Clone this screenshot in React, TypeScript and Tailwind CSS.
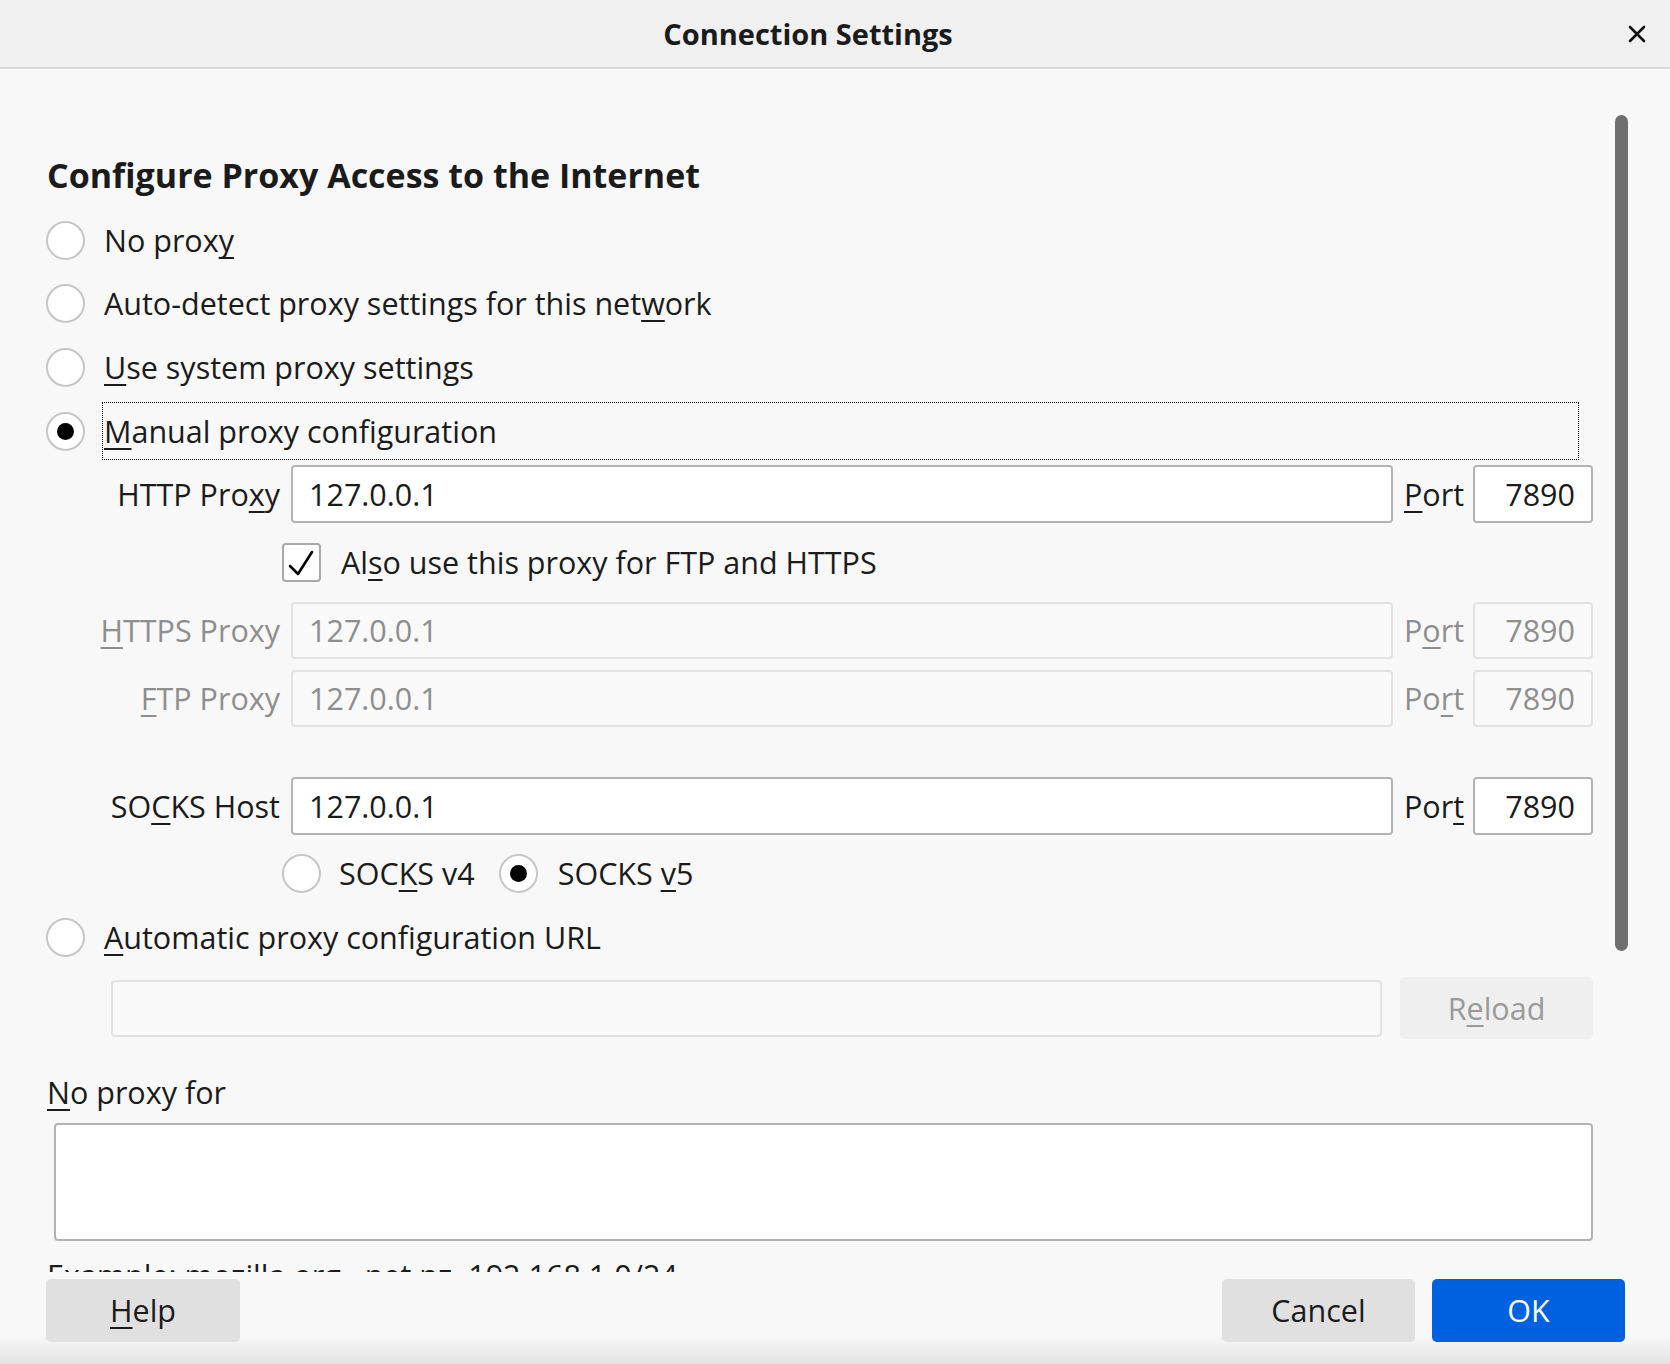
import React from 'react';

function K({ children }: { children: React.ReactNode }) {
  return (
    <span className="underline decoration-2 underline-offset-[5px] [text-decoration-skip-ink:none]">
      {children}
    </span>
  );
}

function Radio({ checked }: { checked?: boolean }) {
  return (
    <span className="flex h-[39px] w-[39px] shrink-0 items-center justify-center rounded-full border-2 border-[#c6c6c6] bg-white">
      {checked && <span className="h-[17px] w-[17px] rounded-full bg-black" />}
    </span>
  );
}

function Field({
  value,
  disabled,
  right,
  className,
}: {
  value?: string;
  disabled?: boolean;
  right?: boolean;
  className: string;
}) {
  return (
    <div
      className={`flex shrink-0 items-center rounded-[4px] border-2 px-[16px] ${
        disabled ? 'border-[#e2e2e2] bg-[#f9f9f9] text-[#8e8e8e]' : 'border-[#b3b3b3] bg-white text-[#1b1b1b]'
      } ${right ? 'justify-end' : 'justify-start'} ${className}`}
    >
      {value}
    </div>
  );
}

function ProxyRow({
  label,
  port,
  disabled,
  className,
}: {
  label: React.ReactNode;
  port: React.ReactNode;
  disabled?: boolean;
  className: string;
}) {
  return (
    <div className={`flex shrink-0 items-center ${className}`}>
      <div className={`w-[234px] shrink-0 text-right ${disabled ? 'text-[#8e8e8e]' : ''}`}>{label}</div>
      <Field value="127.0.0.1" disabled={disabled} className="ml-[11px] h-full w-[1102px]" />
      <div className={`ml-[11px] w-[58px] shrink-0 ${disabled ? 'text-[#8e8e8e]' : ''}`}>{port}</div>
      <Field value="7890" disabled={disabled} right className="ml-[11px] h-full w-[120px]" />
    </div>
  );
}

function RadioRow({
  checked,
  focused,
  children,
  className,
}: {
  checked?: boolean;
  focused?: boolean;
  children: React.ReactNode;
  className: string;
}) {
  return (
    <div className={`flex shrink-0 items-center ${className}`}>
      <Radio checked={checked} />
      <div
        className={`ml-[17px] flex h-full items-center pl-[1px] ${
          focused ? 'w-[1477px] border border-dotted border-black' : 'border border-transparent'
        }`}
      >
        {children}
      </div>
    </div>
  );
}

export default function App() {
  return (
    <div className="flex h-[1364px] w-[1670px] flex-col overflow-hidden bg-[#f8f8f8] font-['Open_Sans','Noto_Sans',sans-serif] text-[30.5px] leading-none text-[#1b1b1b]">
      {/* title bar */}
      <div className="relative flex h-[69px] shrink-0 items-center justify-center border-b-2 border-[#d9d9d9] bg-[#f0f0f0] pr-[54px]">
        <span className="text-[29px] font-bold">Connection Settings</span>
        <svg className="absolute right-[24px] top-[25px] h-[18px] w-[18px]" viewBox="0 0 18 18">
          <path d="M2 2 L16 16 M16 2 L2 16" stroke="#111" strokeWidth="2.6" strokeLinecap="round" />
        </svg>
      </div>

      {/* scrolled content */}
      <div className="flex h-[1203px] shrink-0 overflow-hidden">
        <div className="flex w-[1615px] shrink-0 flex-col pl-[46px]">
          <h1 className="ml-[1px] mt-[84px] flex h-[44px] shrink-0 items-center text-[34px] font-bold">
            Configure Proxy Access to the Internet
          </h1>

          <RadioRow className="mt-[14px] h-[58px]">
            <span>
              No prox<K>y</K>
            </span>
          </RadioRow>
          <RadioRow className="mt-[5px] h-[58px]">
            <span>
              Auto-detect proxy settings for this net<K>w</K>ork
            </span>
          </RadioRow>
          <RadioRow className="mt-[6px] h-[58px]">
            <span>
              <K>U</K>se system proxy settings
            </span>
          </RadioRow>
          <RadioRow checked focused className="mt-[6px] h-[58px]">
            <span>
              <K>M</K>anual proxy configuration
            </span>
          </RadioRow>

          <ProxyRow
            className="mt-[5px] h-[58px]"
            label={
              <>
                HTTP Pro<K>x</K>y
              </>
            }
            port={
              <>
                <K>P</K>ort
              </>
            }
          />

          <div className="ml-[236px] mt-[20px] flex h-[39px] shrink-0 items-center">
            <span className="flex h-[39px] w-[39px] shrink-0 items-center justify-center rounded-[4px] border-2 border-[#a9a9a9] bg-white">
              <svg className="h-[35px] w-[35px]" viewBox="0 0 35 35">
                <path d="M6 21 L14 29 L28 7" fill="none" stroke="#000" strokeWidth="2.6" strokeLinecap="round" strokeLinejoin="round" />
              </svg>
            </span>
            <span className="ml-[20px]">
              Al<K>s</K>o use this proxy for FTP and HTTPS
            </span>
          </div>

          <ProxyRow
            disabled
            className="mt-[20px] h-[57px]"
            label={
              <>
                <K>H</K>TTPS Proxy
              </>
            }
            port={
              <>
                P<K>o</K>rt
              </>
            }
          />
          <ProxyRow
            disabled
            className="mt-[11px] h-[57px]"
            label={
              <>
                <K>F</K>TP Proxy
              </>
            }
            port={
              <>
                Po<K>r</K>t
              </>
            }
          />
          <ProxyRow
            className="mt-[50px] h-[58px]"
            label={
              <>
                SO<K>C</K>KS Host
              </>
            }
            port={
              <>
                Por<K>t</K>
              </>
            }
          />

          <div className="ml-[236px] mt-[18px] flex h-[40px] shrink-0 items-center">
            <Radio />
            <span className="ml-[18px]">
              SOC<K>K</K>S v4
            </span>
            <span className="ml-[24px]">
              <Radio checked />
            </span>
            <span className="ml-[20px]">
              SOCKS <K>v</K>5
            </span>
          </div>

          <RadioRow className="mt-[15px] h-[58px]">
            <span>
              <K>A</K>utomatic proxy configuration URL
            </span>
          </RadioRow>

          <div className="ml-[65px] mt-[11px] flex h-[62px] shrink-0 items-center">
            <Field disabled className="h-[57px] w-[1271px]" />
            <button className="ml-[18px] flex h-[62px] w-[193px] items-center justify-center rounded-[5px] bg-[#efefef] text-[#9a9a9a]">
              R<K>e</K>load
            </button>
          </div>

          <div className="ml-[1px] mt-[33px] flex h-[40px] shrink-0 items-center">
            <span>
              <K>N</K>o proxy for
            </span>
          </div>
          <div className="ml-[8px] mt-[11px] h-[118px] w-[1539px] shrink-0 rounded-[4px] border-2 border-[#b3b3b3] bg-white" />
          <div className="ml-[1px] mt-[14px] shrink-0 whitespace-nowrap leading-[40px]">
            Example: mozilla.org, .net.nz, 192.168.1.0/24
          </div>
        </div>

        {/* scrollbar */}
        <div className="w-[13px] shrink-0 pt-[46px]">
          <div className="h-[836px] w-[13px] rounded-full bg-[#6f6f6f]" />
        </div>
      </div>

      {/* footer */}
      <div className="flex flex-1 items-start bg-[linear-gradient(to_bottom,#f8f8f8_68%,#e3e3e3)] px-[45px] pt-[7px]">
        <button className="ml-[1px] flex h-[63px] w-[194px] items-center justify-center rounded-[5px] bg-[#e0e0e0]">
          <K>H</K>elp
        </button>
        <div className="flex-1" />
        <button className="flex h-[63px] w-[193px] items-center justify-center rounded-[5px] bg-[#e0e0e0]">
          Cancel
        </button>
        <button className="ml-[17px] flex h-[63px] w-[193px] items-center justify-center rounded-[5px] bg-[#0061e0] text-white">
          OK
        </button>
      </div>
    </div>
  );
}
